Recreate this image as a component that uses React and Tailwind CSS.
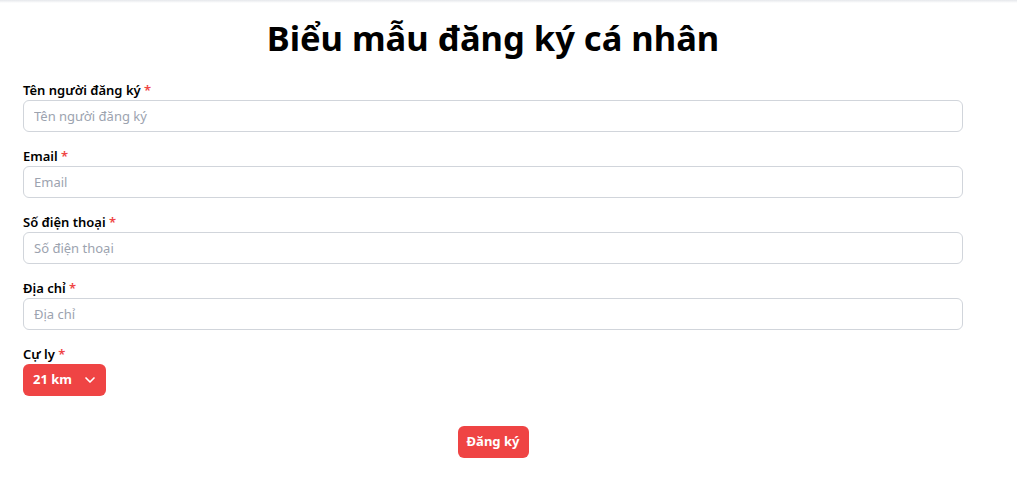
import React, { useState } from 'react';
import { ChevronDown } from 'lucide-react';

const fields = [
  { name: 'name', label: 'Tên người đăng ký', type: 'text' },
  { name: 'email', label: 'Email', type: 'email' },
  { name: 'phone', label: 'Số điện thoại', type: 'tel' },
  { name: 'address', label: 'Địa chỉ', type: 'text' },
];

const App = () => {
  const [form, setForm] = useState({ name: '', email: '', phone: '', address: '' });

  return (
    <div className="min-h-screen bg-white" style={{ fontFamily: '"Noto Sans", "Open Sans", sans-serif' }}>
      <div className="h-[3px] bg-gradient-to-b from-gray-200 to-white" />
      <div className="w-[940px] ml-[23px]">
        <h1 className="text-center text-[34.5px] leading-[40px] font-bold text-black mt-[15px] mb-[22px]">
          Biểu mẫu đăng ký cá nhân
        </h1>

        <form className="flex flex-col gap-[14px]">
          {fields.map((f) => (
            <div key={f.name} className="flex flex-col">
              <label className="text-[13px] leading-[20px] font-semibold text-black">
                {f.label} <span className="text-[#ef4444]">*</span>
              </label>
              <input
                type={f.type}
                placeholder={f.label}
                value={form[f.name]}
                onChange={(e) => setForm({ ...form, [f.name]: e.target.value })}
                className="h-[32px] w-full rounded-md border border-[#d1d5db] px-[10px] text-[13px] text-gray-700 placeholder:text-[#9ca3af] outline-none"
              />
            </div>
          ))}

          <div className="flex flex-col">
            <label className="text-[13px] leading-[20px] font-semibold text-black">
              Cự ly <span className="text-[#ef4444]">*</span>
            </label>
            <button
              type="button"
              className="h-[32px] w-[83px] rounded-md bg-[#ef4444] text-white text-[13px] font-bold flex items-center pl-[10px] gap-[10px]"
            >
              21 km
              <ChevronDown size={16} strokeWidth={2.5} />
            </button>
          </div>

          <div className="flex justify-center mt-[16px]">
            <button
              type="button"
              className="h-[32px] w-[71px] rounded-md bg-[#ef4444] text-white text-[13px] font-bold"
            >
              Đăng ký
            </button>
          </div>
        </form>
      </div>
    </div>
  );
};

export default App;
